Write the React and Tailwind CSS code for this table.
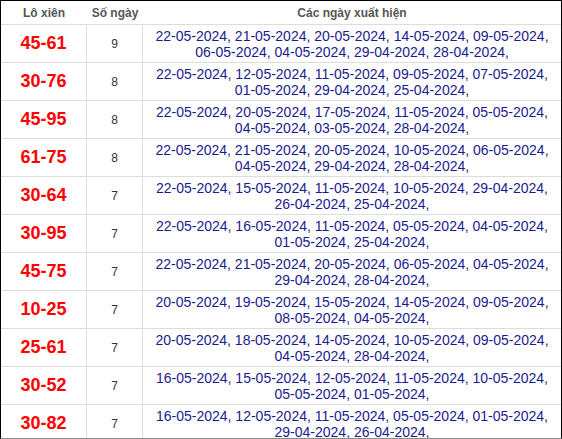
const rows = [
  ["45-61", 9, ["22-05-2024", "21-05-2024", "20-05-2024", "14-05-2024", "09-05-2024", "06-05-2024", "04-05-2024", "29-04-2024", "28-04-2024"]],
  ["30-76", 8, ["22-05-2024", "12-05-2024", "11-05-2024", "09-05-2024", "07-05-2024", "01-05-2024", "29-04-2024", "25-04-2024"]],
  ["45-95", 8, ["22-05-2024", "20-05-2024", "17-05-2024", "11-05-2024", "05-05-2024", "04-05-2024", "03-05-2024", "28-04-2024"]],
  ["61-75", 8, ["22-05-2024", "21-05-2024", "20-05-2024", "10-05-2024", "06-05-2024", "04-05-2024", "29-04-2024", "28-04-2024"]],
  ["30-64", 7, ["22-05-2024", "15-05-2024", "11-05-2024", "10-05-2024", "29-04-2024", "26-04-2024", "25-04-2024"]],
  ["30-95", 7, ["22-05-2024", "16-05-2024", "11-05-2024", "05-05-2024", "04-05-2024", "01-05-2024", "25-04-2024"]],
  ["45-75", 7, ["22-05-2024", "21-05-2024", "20-05-2024", "06-05-2024", "04-05-2024", "29-04-2024", "28-04-2024"]],
  ["10-25", 7, ["20-05-2024", "19-05-2024", "15-05-2024", "14-05-2024", "09-05-2024", "08-05-2024", "04-05-2024"]],
  ["25-61", 7, ["20-05-2024", "18-05-2024", "14-05-2024", "10-05-2024", "09-05-2024", "04-05-2024", "28-04-2024"]],
  ["30-52", 7, ["16-05-2024", "15-05-2024", "12-05-2024", "11-05-2024", "10-05-2024", "05-05-2024", "01-05-2024"]],
  ["30-82", 7, ["16-05-2024", "12-05-2024", "11-05-2024", "05-05-2024", "01-05-2024", "29-04-2024", "26-04-2024"]],
];

function Row({ pair, count, dates }) {
  return (
    <div className="flex h-[38px] shrink-0 border-t border-[#dddddd]">
      <div className="w-[86px] shrink-0 border-r border-[#dddddd] flex items-center justify-center text-[18px] font-bold text-[#ff0000]">
        {pair}
      </div>
      <div className="w-[56px] shrink-0 border-r border-[#dddddd] flex items-center justify-center text-[12px] text-[#333333]">
        {count}
      </div>
      <div className="flex-1 flex items-center justify-center px-2 text-center text-[14px] leading-4 text-[#1a1a8f]">
        {dates.map((d) => d + ", ").join("").trim()}
      </div>
    </div>
  );
}

export default function App() {
  return (
    <div className="w-[562px] h-[439px] overflow-hidden bg-white border-l border-t border-r border-black border-b border-b-[#8a8a8a] flex flex-col font-['Liberation_Sans',Arial,sans-serif]">
      <div className="flex h-[23px] shrink-0 items-center text-[12px] font-bold text-[#555555]">
        <div className="w-[86px] shrink-0 text-center">Lô xiên</div>
        <div className="w-[56px] shrink-0 text-center">Số ngày</div>
        <div className="flex-1 text-center">Các ngày xuất hiện</div>
      </div>
      {rows.map(([pair, count, dates]) => (
        <Row key={pair} pair={pair} count={count} dates={dates} />
      ))}
    </div>
  );
}
